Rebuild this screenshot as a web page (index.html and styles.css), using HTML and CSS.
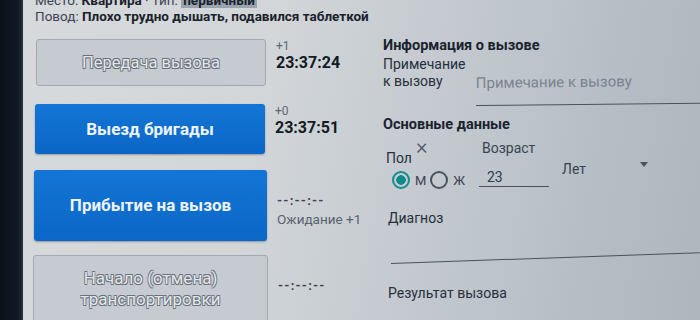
FILE: index.html
```html
<!DOCTYPE html>
<html lang="ru">
<head>
<meta charset="utf-8">
<link rel="stylesheet" href="styles.css">
</head>
<body>
<div class="device">
  <div class="bezel"></div>
  <div class="screen">
    <div class="header">
      <div class="hline">Место: <b>Квартира</b> · Тип: <b class="hl">первичный</b></div>
      <div class="hline">Повод: <b>Плохо трудно дышать, подавился таблеткой</b></div>
    </div>
    <div class="main">
      <div class="steps">
        <div class="step s1">
          <button class="btn gray">Передача вызова</button>
          <div class="time"><span class="delta">+1</span><span class="clock">23:37:24</span></div>
        </div>
        <div class="step s2">
          <button class="btn blue">Выезд бригады</button>
          <div class="time"><span class="delta">+0</span><span class="clock">23:37:51</span></div>
        </div>
        <div class="step s3">
          <button class="btn blue">Прибытие на вызов</button>
          <div class="time mid"><span class="dash">--:--:--</span><span class="wait">Ожидание +1</span></div>
        </div>
        <div class="step s4">
          <button class="btn gray">Начало (отмена)<br>транспортировки</button>
          <div class="time mid"><span class="dash">--:--:--</span></div>
        </div>
      </div>
      <div class="form">
        <div class="title">Информация о вызове</div>
        <div class="note">
          <div class="note-label">Примечание<br>к вызову</div>
          <div class="note-input">Примечание к вызову</div>
        </div>
        <div class="title t2">Основные данные</div>
        <div class="basic">
          <div class="sex">
            <div class="sex-label">Пол <span class="x">×</span></div>
            <div class="radios">
              <span class="radio on"></span><span class="rl">М</span>
              <span class="radio"></span><span class="rl">Ж</span>
            </div>
          </div>
          <div class="age">
            <div class="age-label">Возраст</div>
            <div class="age-input">23</div>
          </div>
          <div class="unit">
            <span>Лет</span>
            <span class="caret"></span>
          </div>
        </div>
        <div class="diag">Диагноз</div>
        <div class="diag-line"></div>
        <div class="result">Результат вызова</div>
      </div>
    </div>
  </div>
</div>
</body>
</html>
```

FILE: styles.css
```css
* { box-sizing: border-box; }
html, body { margin: 0; padding: 0; }
body {
  width: 700px;
  height: 320px;
  overflow: hidden;
  font-family: Roboto, "Noto Sans", sans-serif;
  color: #1d2530;
}
.device {
  display: flex;
  width: 700px;
  height: 320px;
}
.bezel {
  width: 23px;
  flex: none;
  background: linear-gradient(90deg, #0b1019 0%, #111a27 80%, #2a323d 100%);
}
.screen {
  flex: 1;
  background: linear-gradient(100deg, #d7dadc 0%, #d2d6d9 35%, #c3c9cf 60%, #b5bdc4 85%, #aeb6be 100%);
  padding-left: 12px;
  overflow: hidden;
}
.header {
  margin-top: -8px;
  font-size: 13.5px;
  line-height: 16px;
  color: #3a4452;
}
.header b { color: #1a222c; }
.header .hl { background: #9aa4ae; padding: 0 2px; }
.hline { white-space: nowrap; }
.main {
  display: flex;
  margin-top: 15px;
}
.steps {
  width: 345px;
  flex: none;
  display: flex;
  flex-direction: column;
}
.step {
  display: flex;
  align-items: flex-start;
}
.s1 { height: 65px; }
.s2 { height: 66px; }
.s3 { height: 85px; }
.s4 { height: 80px; }
.s1 .btn { height: 47px; margin-left: 1px; }
.s2 .btn { height: 50px; }
.s3 .btn { height: 71px; margin-left: -1px; width: 233px; }
.s4 .btn { height: 70px; margin-left: -2px; width: 235px; }
.btn {
  width: 230px;
  flex: none;
  border-radius: 3px;
  font-family: Roboto, "Noto Sans", sans-serif;
  font-size: 16px;
  line-height: 19px;
  padding: 0;
  cursor: pointer;
}
.btn.gray {
  background: #c6cbd1;
  border: 1px solid #a3a9b0;
  color: #e4e8eb;
  font-size: 16.5px;
  text-shadow: -0.7px -0.7px 0 #68707a, 0.7px 0.7px 0 #68707a, 0.7px -0.7px 0 #68707a, -0.7px 0.7px 0 #68707a;
}
.btn.blue {
  background: linear-gradient(180deg, #1376d6, #0b66c6);
  border: none;
  color: #eef4fb;
  font-weight: bold;
  font-size: 17px;
  box-shadow: 0 1px 2px rgba(0,0,0,0.3);
}
.s4 .btn { line-height: 21px; padding-top: 2px; padding-bottom: 4px; font-size: 17px; }
.time {
  margin-left: 10px;
  display: flex;
  flex-direction: column;
}
.delta {
  font-size: 12px;
  line-height: 12px;
  color: #5d6672;
  margin-top: 1px;
}
.clock {
  font-size: 16px;
  font-weight: bold;
  line-height: 18px;
  margin-top: 2px;
  color: #141b24;
}
.time.mid { padding-top: 24px; }
.dash {
  font-size: 13px;
  font-weight: bold;
  letter-spacing: 1.2px;
  color: #3a4350;
  line-height: 14px;
}
.wait {
  font-size: 13.5px;
  color: #5a636e;
  margin-top: 3px;
}
.form {
  flex: 1;
  padding-left: 3px;
}
.title {
  font-size: 14.5px;
  font-weight: bold;
  line-height: 18px;
  margin-top: -2px;
  color: #1b232e;
}
.title.t2 { margin-top: 26px; }
.note {
  display: flex;
  align-items: flex-end;
  margin-top: 1px;
}
.note-label {
  font-size: 14px;
  line-height: 17px;
  width: 93px;
  flex: none;
  color: #27303b;
}
.note-input {
  flex: 1;
  font-size: 15px;
  color: #7a838d;
  border-bottom: 1px solid #4a525c;
  padding-bottom: 13px;
  margin-bottom: -16px;
  line-height: 18px;
  transform: rotate(-0.6deg);
  transform-origin: left bottom;
}
.basic {
  display: flex;
  margin-top: 6px;
  height: 58px;
}
.sex { width: 99px; flex: none; padding-left: 3px; }
.sex-label {
  font-size: 14px;
  line-height: 17px;
  padding-top: 10px;
  color: #27303b;
  position: relative;
}
.x {
  position: absolute;
  left: 30px;
  top: -4px;
  font-size: 22px;
  line-height: 22px;
  color: #4c5560;
  font-weight: 300;
}
.radios {
  display: flex;
  align-items: center;
  margin-top: 4px;
  margin-left: 6px;
}
.radio {
  width: 18px;
  height: 18px;
  border-radius: 50%;
  border: 2px solid #4a525d;
  display: inline-block;
}
.radio.on {
  border-color: #138d8d;
  background: radial-gradient(circle, #128a8c 0 4.5px, transparent 5px);
}
.rl {
  font-size: 13px;
  color: #3b4450;
  margin: 0 4px 0 5px;
}
.age { width: 80px; flex: none; }
.age-label {
  font-size: 14px;
  line-height: 17px;
  color: #3a4350;
}
.age-input {
  margin-top: 11px;
  width: 70px;
  margin-left: -3px;
  padding-left: 8px;
  font-size: 14px;
  line-height: 18px;
  color: #2a3a50;
  border-bottom: 1px solid #4a525c;
}
.unit {
  flex: 1;
  display: flex;
  justify-content: space-between;
  align-items: flex-start;
  padding-top: 21px;
  padding-right: 52px;
  font-size: 14px;
  color: #3a4350;
}
.caret {
  width: 0;
  height: 0;
  border-left: 4px solid transparent;
  border-right: 4px solid transparent;
  border-top: 5px solid #4a525d;
  margin-top: 1px;
}
.diag {
  font-size: 14px;
  line-height: 17px;
  margin-top: 12px;
  padding-left: 5px;
  color: #27303b;
}
.diag-line {
  height: 1px;
  background: #4a525c;
  margin-top: 36px;
  margin-left: 8px;
  transform: rotate(-2deg);
  transform-origin: left;
}
.result {
  font-size: 14px;
  line-height: 17px;
  margin-top: 21px;
  padding-left: 5px;
  color: #27303b;
}
```
